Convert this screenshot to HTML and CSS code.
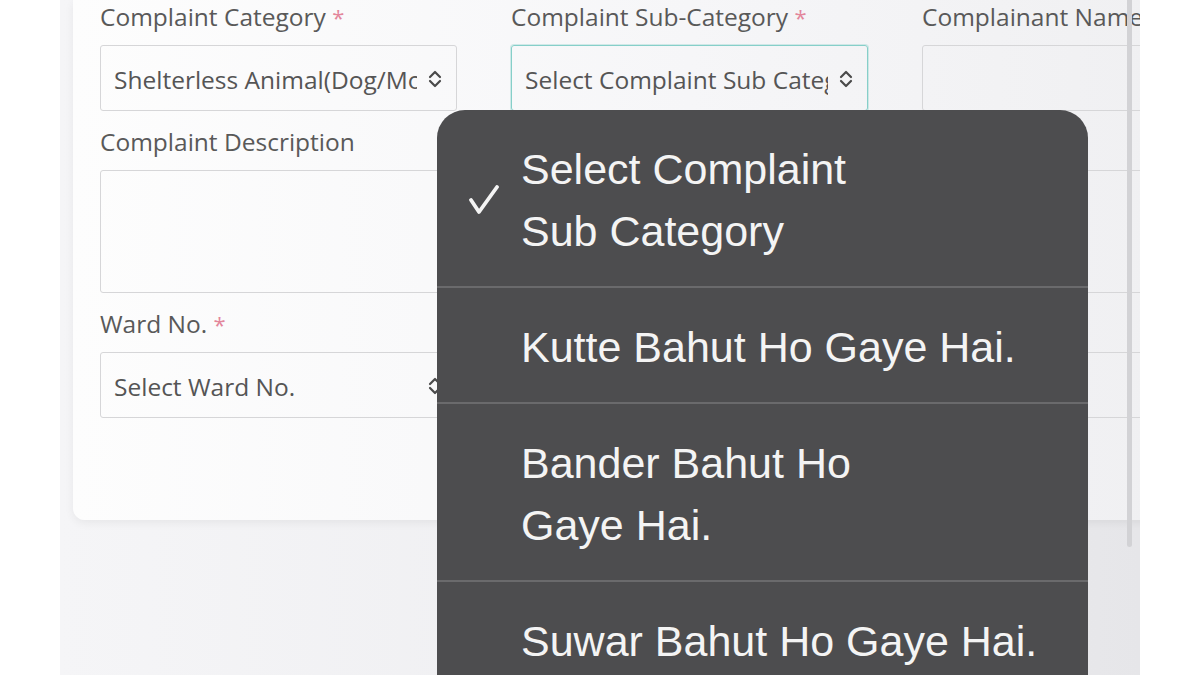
FILE: index.html
```html
<!DOCTYPE html>
<html lang="en">
<head>
    <meta charset="UTF-8">
    <meta name="viewport" content="width=device-width, initial-scale=1.0">
    <title>Register Complaint</title>
    <link rel="stylesheet" href="styles.css">
</head>
<body>

<div class="screen">
    <div class="card">
        <form class="form-grid">
            <div class="field">
                <label>Complaint Category <span class="req">*</span></label>
                <div class="select">
                    <span class="select-text">Shelterless Animal(Dog/Monkey/Pig)</span>
                    <svg class="arrows" width="14" height="18" viewBox="0 0 14 18"><polyline points="2,7 7,2 12,7"/><polyline points="2,11 7,16 12,11"/></svg>
                </div>
            </div>
            <div class="field">
                <label>Complaint Sub-Category <span class="req">*</span></label>
                <div class="select focused">
                    <span class="select-text">Select Complaint Sub Category</span>
                    <svg class="arrows" width="14" height="18" viewBox="0 0 14 18"><polyline points="2,7 7,2 12,7"/><polyline points="2,11 7,16 12,11"/></svg>
                </div>
            </div>
            <div class="field">
                <label>Complainant Name</label>
                <div class="input"></div>
            </div>

            <div class="field">
                <label>Complaint Description</label>
                <div class="textarea"></div>
            </div>
            <!-- these fields sit under the open picker -->
            <div class="field">
                <label></label>
                <div class="textarea"></div>
            </div>
            <div class="field">
                <label></label>
                <div class="textarea"></div>
            </div>

            <div class="field">
                <label>Ward No. <span class="req">*</span></label>
                <div class="select">
                    <span class="select-text">Select Ward No.</span>
                    <svg class="arrows" width="14" height="18" viewBox="0 0 14 18"><polyline points="2,7 7,2 12,7"/><polyline points="2,11 7,16 12,11"/></svg>
                </div>
            </div>
            <div class="field">
                <label></label>
                <div class="input"></div>
            </div>
            <div class="field">
                <label></label>
                <div class="input"></div>
            </div>
        </form>
    </div>

    <div class="scroll-thumb"></div>

    <!-- native picker opened over the sub-category select -->
    <ul class="picker">
        <li class="picker-item">
            <span class="check">
                <svg width="32" height="30" viewBox="0 0 32 30"><polyline points="3,15 11,27 29,2"/></svg>
            </span>
            <span class="picker-text">Select Complaint<br>Sub Category</span>
        </li>
        <li class="picker-item">
            <span class="check"></span>
            <span class="picker-text">Kutte Bahut Ho Gaye Hai.</span>
        </li>
        <li class="picker-item">
            <span class="check"></span>
            <span class="picker-text">Bander Bahut Ho<br>Gaye Hai.</span>
        </li>
        <li class="picker-item">
            <span class="check"></span>
            <span class="picker-text">Suwar Bahut Ho Gaye Hai.</span>
        </li>
    </ul>
</div>

</body>
</html>
```

FILE: styles.css
```css
body {
    margin: 0;
    padding: 0;
    background-color: #fff;
    font-family: "Open Sans", Arial, sans-serif;
    overflow: hidden;
}

.screen {
    position: relative;
    margin: 0 60px;
    width: 1080px;
    height: 675px;
    overflow: hidden;
    background: linear-gradient(to right, #f5f5f7, #ebebee 80%, #e6e6e9);
}

.card {
    margin-left: 13px;
    width: 1206px;
    padding: 0 0 102px 27px;
    background: linear-gradient(to right, #fdfdfd, #f6f6f8 50%, #eeeef0);
    border-radius: 0 0 12px 12px;
    box-shadow: 0 3px 10px rgba(0, 0, 0, 0.06);
}

.form-grid {
    display: grid;
    grid-template-columns: repeat(3, 357px);
    column-gap: 54px;
    row-gap: 14px;
    margin: 0;
}

.field {
    display: flex;
    flex-direction: column;
}

.field label {
    display: block;
    height: 34px;
    font-size: 24.5px;
    line-height: 34px;
    color: #595959;
    margin-bottom: 11px;
    white-space: nowrap;
}

.req {
    color: #e3869b;
    font-size: 22px;
}

.select, .input {
    box-sizing: border-box;
    height: 66px;
    border: 1px solid #d6d6d8;
    border-radius: 3px;
}

.select {
    display: flex;
    align-items: center;
    padding: 2px 14px 0 13px;
}

.select.focused {
    border-color: #86cfc9;
    box-shadow: 0 0 0 1px rgba(134, 207, 201, 0.35);
}

.select-text {
    flex: 1;
    overflow: hidden;
    white-space: nowrap;
    font-size: 24.5px;
    color: #555;
    margin-right: 11px;
}

.arrows {
    fill: none;
    stroke: #4a4a4a;
    stroke-width: 2.2;
    stroke-linecap: round;
    stroke-linejoin: round;
}

.textarea {
    box-sizing: border-box;
    height: 123px;
    border: 1px solid #d6d6d8;
    border-radius: 3px;
}

.scroll-thumb {
    position: absolute;
    left: 1067px;
    top: -10px;
    width: 5px;
    height: 557px;
    border-radius: 3px;
    background-color: #d2d2d5;
}

.picker {
    position: absolute;
    left: 377px;
    top: 110px;
    width: 651px;
    bottom: 0;
    margin: 0;
    padding: 0;
    list-style-type: none;
    background-color: #4d4d4f;
    border-radius: 28px 28px 0 0;
    font-family: "Liberation Sans", Arial, sans-serif;
    color: #f4f4f4;
}

.picker-item {
    display: flex;
    align-items: center;
    padding: 28px 0 24px 0;
    font-size: 43px;
    line-height: 62px;
}

.picker-item + .picker-item {
    border-top: 2px solid #6a6a6c;
}

.check {
    display: flex;
    width: 84px;
    flex-shrink: 0;
    padding-left: 31px;
    box-sizing: border-box;
}

.check svg {
    fill: none;
    stroke: #f4f4f4;
    stroke-width: 3.8;
    stroke-linecap: round;
    stroke-linejoin: round;
}
```
